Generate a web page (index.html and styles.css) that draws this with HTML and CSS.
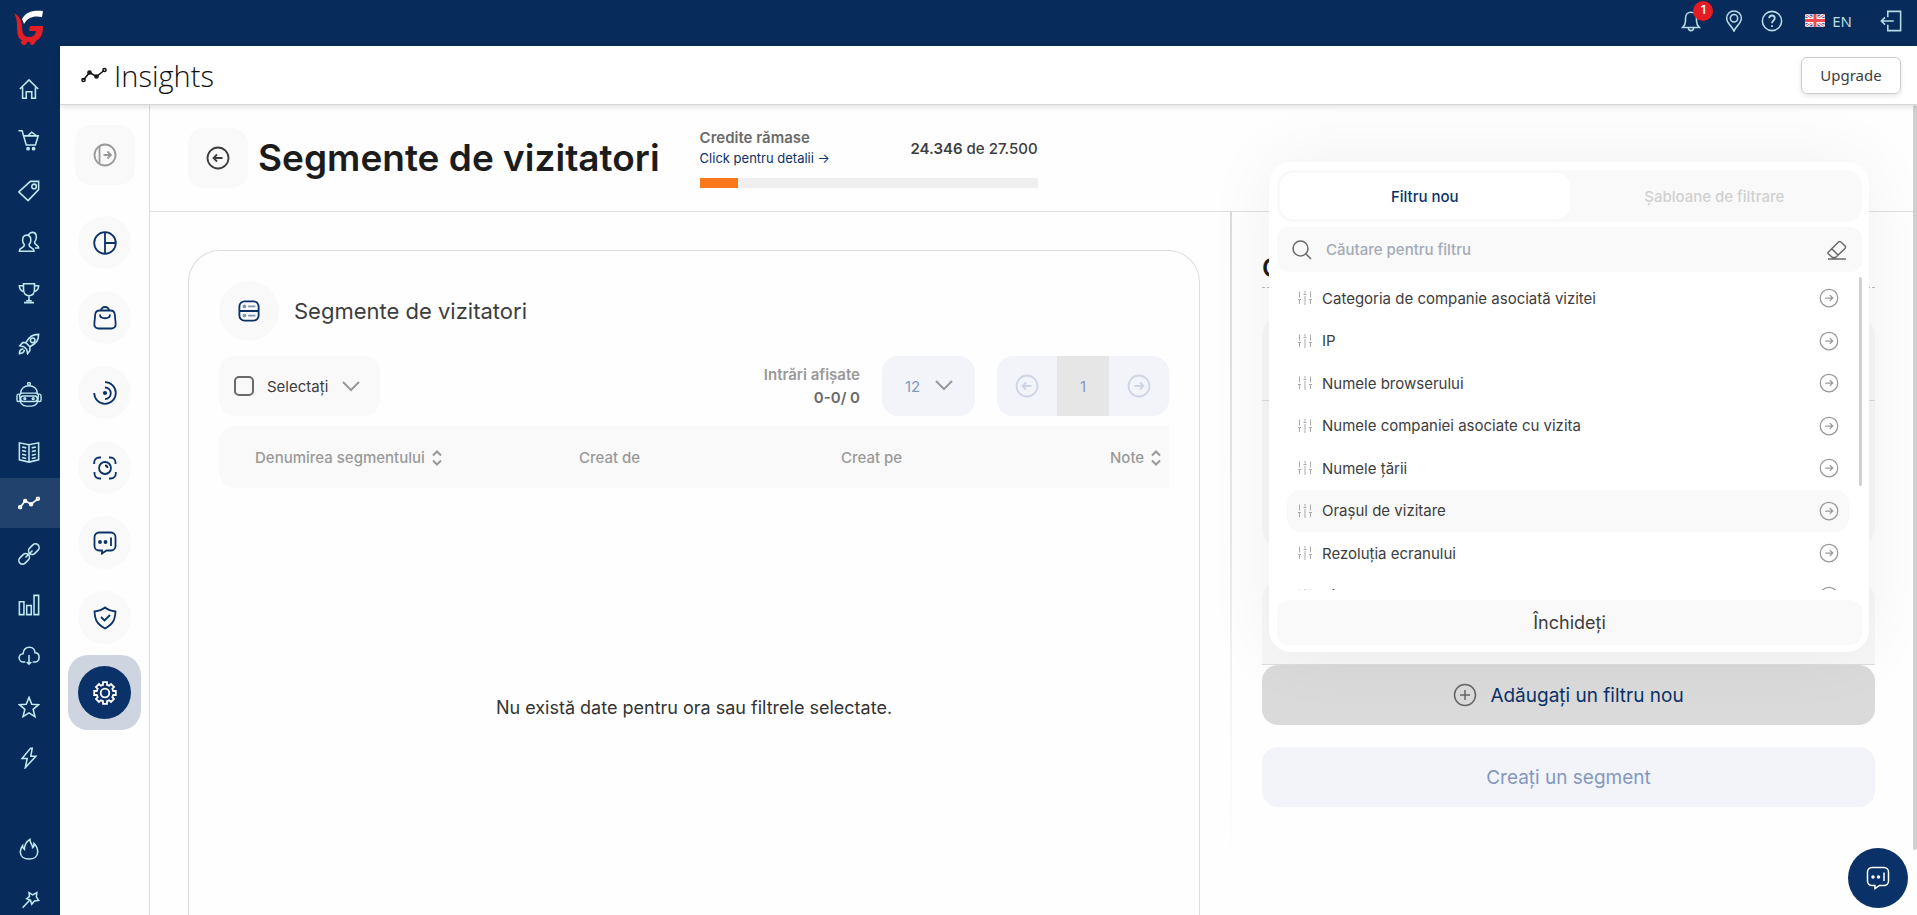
FILE: index.html
```
<!DOCTYPE html>
<html lang="ro">
<head>
    <meta charset="UTF-8">
    <meta name="viewport" content="width=device-width, initial-scale=1.0">
    <title>Insights</title>
    <link rel="stylesheet" href="styles.css">
</head>
<body>

    <!-- Shared icons -->
    <svg class="symbols" aria-hidden="true">
        <symbol id="arrow-right" viewBox="0 0 24 24"><circle cx="12" cy="12" r="10.5"/><path d="M7.5 12h9M13 8.5l3.5 3.5-3.5 3.5"/></symbol>
        <symbol id="arrow-left" viewBox="0 0 24 24"><circle cx="12" cy="12" r="10.5"/><path d="M16.5 12h-9M11 8.5L7.5 12l3.5 3.5"/></symbol>
        <symbol id="chevron" viewBox="0 0 18 18"><path d="M1 5l8 8 8-8"/></symbol>
        <symbol id="sort" viewBox="0 0 10 16"><path d="M1 5.500l4-4 4 4M1 10.500l4 4 4-4"/></symbol>
        <symbol id="sliders" viewBox="0 0 16 16"><path d="M2.500 1.500v6M2.500 9.500v4.500M1 9.500h3M8 1v2.500M6.500 4.500h3M8 6v9M13.500 1.500v6M13.500 9.500v4.500M12 9.500h3"/></symbol>
        <symbol id="trend" viewBox="0 0 26 16"><path d="M2.500 13l6-7.500 7 4 7.500-6"/><circle cx="2.500" cy="13" r="1.600"/><circle cx="8.500" cy="5.500" r="1.600"/><circle cx="15.500" cy="9.500" r="1.600"/><circle cx="23.500" cy="3" r="1.600"/></symbol>
        <symbol id="chat" viewBox="0 0 24 24"><path d="M6 1.500h12a4.500 4.500 0 0 1 4.500 4.500v9a4.500 4.500 0 0 1-4.500 4.500h-4.500L9 22.500v-3H6A4.500 4.500 0 0 1 1.500 15V6A4.500 4.500 0 0 1 6 1.500zM18 6.500v8.500"/><circle class="dot" cx="7" cy="11" r="1"/><circle class="dot" cx="12.500" cy="11" r="1"/></symbol>
    </svg>

    <div class="app">
        <nav class="sidebar">
            <a class="logo" href="#" aria-label="Gomag">
                <svg width="30" height="36" viewBox="0 0 30 36">
                    <path fill="#fff" d="M8 10C12 3 18 1 29 2l-1 6c-8-1.500-14 0-18 7z"/>
                    <path fill="#e31e24" d="M0 4c5 3 7 6 8 12 0 9 2 12 7 12 4 0 6-2 7-6h-7l1-5h13c0 10-3 16-14 16C5 33 3 28 3 17 3 11 2 8 0 4z"/>
                    <path fill="#e31e24" d="M7 32h6c0 3-1 4-3 4s-2-1-3-2zM16 32h6l-1 2c-1 1-1 2-3 2s-2-2-2-4z"/>
                </svg>
            </a>
            <a class="side-link" href="#" aria-label="Acasă"><svg viewBox="0 0 24 24"><path d="M2 12L12 2l10 10M5 10v12h4v-7h6v7h4V10"/></svg></a>
            <a class="side-link" href="#" aria-label="Comenzi"><svg viewBox="0 0 24 24"><path d="M.5 2h4l4.500 15.500h10l3-10H6.500M10 8l5-4.500 6 4.500"/><circle class="dot" cx="11" cy="21.500" r="1.200"/><circle class="dot" cx="17" cy="21.500" r="1.200"/></svg></a>
            <a class="side-link" href="#" aria-label="Produse"><svg viewBox="0 0 24 24"><path d="M13.500 1.500h9v9L11 22.500.8 13z"/><circle cx="17.500" cy="7" r="2.500"/></svg></a>
            <a class="side-link" href="#" aria-label="Clienți"><svg viewBox="0 0 24 24"><path d="M9.500 4.500c3 0 4.500 2 4.500 5.500 0 2.500-1 4-2 5 0 2 1 2.500 3 3.500 2 .8 2.500 1.500 2.500 3.500h-16c0-2 .5-2.700 2.500-3.500 2-1 3-1.500 3-3.500-1-1-2-2.500-2-5 0-3.500 1.500-5.500 4.500-5.500zM11.500 4c1-1.500 2.500-2.500 4-2.500 3 0 4.500 2 4.500 5 0 2.500-1 4.500-2 5.500 0 2 1 2.500 2.500 3.500 1.500.7 2 1.500 2 3h-4"/></svg></a>
            <a class="side-link" href="#" aria-label="Concursuri"><svg viewBox="0 0 24 24"><path d="M6 2h12v6c0 4-2 7-6 7s-6-3-6-7zM6 4H1.500c0 4 1.500 6 5.500 6.500M18 4h4.500c0 4-1.500 6-5.500 6.500M12 15v6M9 20.500h6M6.500 22.500h11"/></svg></a>
            <a class="side-link" href="#" aria-label="Marketing"><svg viewBox="0 0 24 24"><path d="M22.500 1.500c-7 0-10 2.500-14 9l4.500 4.500c7-4 9.500-7 9.500-13.500zM8.500 10.500H5L2 14l4.500 1M13 15v4l-2.500 3.500L9.500 18M6.500 15l3 3M6 17.500c-3 0-4.500 2-4.500 5 3 0 5-1.500 5.500-4"/><circle cx="16" cy="8" r="2.500"/></svg></a>
            <a class="side-link robot" href="#" aria-label="Asistent"><svg viewBox="0 0 28 28"><path d="M5 12c0-5 4-8 9-8s9 3 9 8M7 12h14a3 3 0 0 1 3 4c0 7-3 10-7 10h-6c-4 0-7-3-7-10a3 3 0 0 1 3-4zM8 15h12a2 2 0 0 1 0 6H8a2 2 0 0 1 0-6zM4 13H2.500c-1 0-1.500 1-1.500 2v4c0 1 .5 2 1.500 2H4M24 13h1.500c1 0 1.500 1 1.500 2v4c0 1-.5 2-1.500 2H24"/><circle cx="14" cy="2" r="1.500"/><circle cx="9.500" cy="18" r="1"/><circle cx="18.500" cy="18" r="1"/></svg></a>
            <a class="side-link" href="#" aria-label="Blog"><svg viewBox="0 0 24 24"><path d="M12 4L1.500 2v18.500L12 23l10.500-2.500V2zM12 4v19M4.500 6.500L9 7.500M4.500 10.500l4.500 1M4.500 14.500l4.500 1M4.500 18l4.500 1M19.500 6.500L15 7.500M19.500 10.500l-4.500 1M19.500 14.500l-4.500 1M19.500 18l-4.500 1"/></svg></a>
            <a class="side-link active" href="#" aria-label="Insights"><svg viewBox="0 0 26 16"><use href="#trend"/></svg></a>
            <a class="side-link" href="#" aria-label="Integrări"><svg viewBox="0 0 24 24"><g transform="rotate(-45 12 12)"><rect x="-2" y="8" width="13" height="8" rx="4"/><rect x="13" y="8" width="13" height="8" rx="4"/><path d="M6.500 12h11"/></g></svg></a>
            <a class="side-link" href="#" aria-label="Rapoarte"><svg viewBox="0 0 24 24"><path d="M1.500 8.500h5v14h-5zM9.500 12.500h5v10h-5zM17.500 1.500h5v21h-5z"/></svg></a>
            <a class="side-link" href="#" aria-label="Import"><svg viewBox="0 0 24 24"><path d="M8 18.500H6a4.500 4.500 0 0 1-.5-9C6 5 9 2.500 12.500 2.500c4 0 6 3 6 6 3 0 4.500 2 4.500 5s-2 5-4.500 5H16M12 11v10M9.500 18.500L12 21l2.500-2.500"/></svg></a>
            <a class="side-link" href="#" aria-label="Favorite"><svg viewBox="0 0 24 24"><path d="M12 1.500l3 7.500 7.500.5-6 5 2 8-6.500-4-6.500 4 2-8-6-5L9 9z"/></svg></a>
            <a class="side-link" href="#" aria-label="Acțiuni"><svg viewBox="0 0 24 24"><path d="M13.500 1.500L4.500 12.500h5.500l-2 10L19.500 10h-5.500l1.500-8.500z"/></svg></a>
            <a class="side-link extra" href="#" aria-label="Noutăți"><svg viewBox="0 0 24 24"><path d="M13 1.500c0 4 3 6 3 9 1.500-1 1.500-2.500 1.500-4.500 3 3 4 6 4 9 0 5-4 8-9.500 8s-9.500-3-9.500-8c0-2.500 1-4.500 2.500-6.500 0 2 .5 3 2 4 0-5 2-8.500 6-11z"/></svg></a>
            <a class="side-link" href="#" aria-label="Teme"><svg viewBox="0 0 24 24"><path d="M12 4l4 2.500L20.500 4 20 8.500l2.500 4-4.500.5-3 3.500-1.500-4.500-4-1.500 3-2.500zM13 12l-8 8.500"/></svg></a>
        </nav>

        <div class="page">
            <header class="topbar">
                <button class="top-icon bell" type="button" aria-label="Notificări">
                    <svg viewBox="0 0 24 24"><path d="M3 19c2-2 3-3 3-7V9c0-4 2.500-6.500 6-6.500S18 5 18 9v3c0 4 1 5 3 7zM9 19.500c.5 4 5.500 4 6 0"/></svg>
                    <span class="badge">1</span>
                </button>
                <button class="top-icon pin" type="button" aria-label="Locație"><svg viewBox="0 0 24 24"><path d="M12 23c-1.500-5-8-8-8-14a8 8 0 0 1 16 0c0 6-6.500 9-8 14z"/><circle cx="12" cy="9" r="4"/></svg></button>
                <button class="top-icon help" type="button" aria-label="Ajutor"><svg viewBox="0 0 24 24"><circle cx="12" cy="12" r="10.500"/><path class="mark" d="M9 9c0-4 6-4 6 0 0 2.500-3 2.500-3 5.500M12 16.500v2"/></svg></button>
                <button class="language" type="button">
                    <svg width="20" height="13" viewBox="0 0 20 13"><rect width="20" height="13" fill="#3f51a3"/><path d="M0 0l20 13M20 0L0 13" stroke="#fff" stroke-width="3"/><path d="M0 0l20 13M20 0L0 13" stroke="#f04a50" stroke-width="1"/><path d="M10 0v13M0 6.500h20" stroke="#fff" stroke-width="5"/><path d="M10 0v13M0 6.500h20" stroke="#f04a50" stroke-width="3"/></svg>
                    <span>EN</span>
                </button>
                <button class="top-icon" type="button" aria-label="Ieșire"><svg viewBox="0 0 24 24"><path d="M8.500 8V1.500h14v21h-14V16M15 12H1.500M5.500 8l-4 4 4 4"/></svg></button>
            </header>

            <div class="titlebar">
                <svg class="title-icon" viewBox="0 0 26 16"><use href="#trend"/></svg>
                <span class="app-name">Insights</span>
                <button class="upgrade" type="button">Upgrade</button>
            </div>

            <div class="body">
                <nav class="subnav">
                    <button class="toggle" type="button" aria-label="Extinde meniul"><svg viewBox="0 0 24 24"><circle cx="12" cy="12" r="10.500"/><path d="M6.500 3.500v17M10.500 12h7.500M14.500 8.500L18 12l-3.500 3.500"/></svg></button>
                    <a class="sub-link" href="#" aria-label="Panou"><span><svg viewBox="0 0 24 24"><circle cx="12" cy="12" r="10.800"/><path d="M12 1v22M12 12h11"/></svg></span></a>
                    <a class="sub-link" href="#" aria-label="Vânzări"><span><svg viewBox="0 0 24 24"><path d="M6.500 4.500h11c3 0 4 1.500 4.300 4l.8 8.500c.4 3.500-1 5.500-4 5.500H5.400c-3 0-4.400-2-4-5.500l.8-8.500c.3-2.500 1.300-4 4.300-4zM8 4.500a4 3.500 0 0 1 8 0M7 8.500c0 5 10 5 10 0"/></svg></span></a>
                    <a class="sub-link" href="#" aria-label="Vizitatori"><span><svg viewBox="0 0 24 24"><path d="M12 1.200a10.800 10.800 0 1 1-10.800 10.800M12 6.500a5.800 5.800 0 0 1 0 11.600"/><circle class="dot" cx="12" cy="12" r="1.200"/></svg></span></a>
                    <a class="sub-link" href="#" aria-label="Înregistrări"><span><svg viewBox="0 0 24 24"><path d="M1.200 8V6.500a5 5 0 0 1 5-5H8M16 1.500h1.500a5 5 0 0 1 5 5V8M22.800 16v1.500a5 5 0 0 1-5 5H16M8 22.500H6.500a5 5 0 0 1-5-5V16M12 9.500a2.500 2.500 0 0 1 2.500 2.500"/><circle cx="12" cy="12" r="6"/></svg></span></a>
                    <a class="sub-link" href="#" aria-label="Mesaje"><span><svg viewBox="0 0 24 24"><use href="#chat"/></svg></span></a>
                    <a class="sub-link" href="#" aria-label="Confidențialitate"><span><svg viewBox="0 0 24 24"><path d="M12 1.500c3 2.500 6.500 3.500 10.500 4-.5 8-2 12.500-10.500 17C3.500 18 2 13.500 1.500 5.500c4-.5 7.500-1.500 10.500-4zM8 11l3.500 3.500L17 9"/></svg></span></a>
                    <a class="sub-link active" href="#" aria-label="Setări"><span><svg viewBox="0 0 24 24"><circle cx="12" cy="12" r="4.300"/><path d="M10 1.200h4v2.600l2.200.9L18 3l3 3-1.700 1.800.9 2.200h2.600v4h-2.600l-.9 2.200L21 18l-3 3-1.800-1.700-2.200.9v2.600h-4v-2.600l-2.200-.9L6 21l-3-3 1.700-1.800-.9-2.200H1.200v-4h2.600l.9-2.200L3 6l3-3 1.800 1.700 2.200-.9z"/></svg></span></a>
                </nav>

                <main class="main">
                    <div class="page-head">
                        <button class="back" type="button" aria-label="Înapoi"><svg viewBox="0 0 24 24"><use href="#arrow-left"/></svg></button>
                        <h1>Segmente de vizitatori</h1>
                        <div class="credits">
                            <div class="credits-row">
                                <div>
                                    <div class="credits-label">Credite rămase</div>
                                    <a href="#">Click pentru detalii →</a>
                                </div>
                                <div class="credits-count"><b>24.346</b> de 27.500</div>
                            </div>
                            <div class="bar"><div class="bar-fill" style="width: 11.5%"></div></div>
                        </div>
                    </div>

                    <div class="columns">
                        <section class="card">
                            <div class="card-head">
                                <span class="card-icon"><svg viewBox="0 0 24 24"><path d="M7 1.500h10A5.500 5.500 0 0 1 22.500 7v10a5.500 5.500 0 0 1-5.500 5.500H7A5.500 5.500 0 0 1 1.500 17V7A5.500 5.500 0 0 1 7 1.500zM1.500 12h21"/><path class="soft" d="M11 7h8M11 17h8"/><circle class="soft dot" cx="7" cy="7" r="1"/><circle class="soft dot" cx="7" cy="17" r="1"/></svg></span>
                                <h2>Segmente de vizitatori</h2>
                            </div>

                            <div class="toolbar">
                                <div class="select-all">
                                    <input type="checkbox" id="select-all">
                                    <label for="select-all">Selectați</label>
                                    <svg class="chevron"><use href="#chevron"/></svg>
                                </div>
                                <div class="entries">
                                    <div class="entries-label">Intrări afișate</div>
                                    <div>0-0/ 0</div>
                                </div>
                                <div class="per-page">
                                    <select aria-label="Intrări pe pagină">
                                        <option>12</option>
                                    </select>
                                    <svg class="chevron"><use href="#chevron"/></svg>
                                </div>
                                <div class="pager">
                                    <button type="button" aria-label="Pagina anterioară"><svg viewBox="0 0 24 24"><use href="#arrow-left"/></svg></button>
                                    <button class="current" type="button">1</button>
                                    <button type="button" aria-label="Pagina următoare"><svg viewBox="0 0 24 24"><use href="#arrow-right"/></svg></button>
                                </div>
                            </div>

                            <table>
                                <thead>
                                    <tr>
                                        <th class="col-name">Denumirea segmentului <svg><use href="#sort"/></svg></th>
                                        <th class="col-by">Creat de</th>
                                        <th class="col-on">Creat pe</th>
                                        <th>Note <svg><use href="#sort"/></svg></th>
                                    </tr>
                                </thead>
                                <tbody>
                                    <tr><td colspan="4">Nu există date pentru ora sau filtrele selectate.</td></tr>
                                </tbody>
                            </table>
                        </section>

                        <aside class="builder">
                            <h2>Creați un segment</h2>
                            <div class="filters">
                                <div class="filter-block"><div class="filter-head"></div></div>
                                <div class="filter-block last"><div class="filter-head"></div></div>
                                <button class="add-filter" type="button">
                                    <svg viewBox="0 0 24 24"><circle cx="12" cy="12" r="10.500"/><path d="M12 7v10M7 12h10"/></svg>
                                    <span>Adăugați un filtru nou</span>
                                </button>

                                <div class="popup">
                                    <div class="tabs">
                                        <button class="active" type="button">Filtru nou</button>
                                        <button type="button">Șabloane de filtrare</button>
                                    </div>
                                    <div class="search">
                                        <svg viewBox="0 0 20 20"><circle cx="8.500" cy="8.500" r="7.500"/><path d="M14 14l5 5"/></svg>
                                        <input type="text" placeholder="Căutare pentru filtru" aria-label="Căutare pentru filtru">
                                        <button type="button" aria-label="Șterge"><svg viewBox="0 0 20 20"><path d="M1.500 12L11.500 2q1-1 2.500 0L18 6q1 1 0 2.500L8.500 17.500H5.500L1.500 14q-1-1 0-2zM5 9l6 6M1 19h18"/></svg></button>
                                    </div>
                                    <div class="filter-list">
                                        <div class="filter-rows">
                                            <button type="button"><svg class="sliders"><use href="#sliders"/></svg><span>Categoria de companie asociată vizitei</span><svg class="go"><use href="#arrow-right"/></svg></button>
                                            <button type="button"><svg class="sliders"><use href="#sliders"/></svg><span>IP</span><svg class="go"><use href="#arrow-right"/></svg></button>
                                            <button type="button"><svg class="sliders"><use href="#sliders"/></svg><span>Numele browserului</span><svg class="go"><use href="#arrow-right"/></svg></button>
                                            <button type="button"><svg class="sliders"><use href="#sliders"/></svg><span>Numele companiei asociate cu vizita</span><svg class="go"><use href="#arrow-right"/></svg></button>
                                            <button type="button"><svg class="sliders"><use href="#sliders"/></svg><span>Numele țării</span><svg class="go"><use href="#arrow-right"/></svg></button>
                                            <button class="hover" type="button"><svg class="sliders"><use href="#sliders"/></svg><span>Orașul de vizitare</span><svg class="go"><use href="#arrow-right"/></svg></button>
                                            <button type="button"><svg class="sliders"><use href="#sliders"/></svg><span>Rezoluția ecranului</span><svg class="go"><use href="#arrow-right"/></svg></button>
                                            <button type="button"><svg class="sliders"><use href="#sliders"/></svg><span>Sistem</span><svg class="go"><use href="#arrow-right"/></svg></button>
                                        </div>
                                        <div class="list-thumb"></div>
                                    </div>
                                    <button class="close" type="button">Închideți</button>
                                </div>
                            </div>
                            <button class="create" type="button">Creați un segment</button>
                        </aside>
                    </div>
                </main>
                <div class="page-thumb"></div>
            </div>
        </div>
    </div>

    <button class="chat-button" type="button" aria-label="Chat"><svg viewBox="0 0 24 24"><use href="#chat"/></svg></button>

</body>
</html>
```
FILE: styles.css
```
* {
    box-sizing: border-box;
}
body {
    margin: 0;
    font-family: Inter, "Noto Sans", sans-serif;
    font-size: 15px;
    color: #3d3d3d;
    background-color: #fefefe;
    overflow: hidden;
}
h1, h2 {
    margin: 0;
}
a {
    text-decoration: none;
}
button, input, select {
    font: inherit;
    color: inherit;
    border: none;
    padding: 0;
    margin: 0;
    background: none;
}
button {
    cursor: pointer;
}
svg {
    fill: none;
    stroke: currentColor;
    stroke-width: 1.5;
    flex-shrink: 0;
}
.dot {
    fill: currentColor;
}
.symbols {
    display: none;
}

/* Layout */
.app {
    display: flex;
    height: 100vh;
    overflow: hidden;
}
.page {
    flex: 1;
    display: flex;
    flex-direction: column;
    min-width: 0;
}
.body {
    flex: 1;
    display: flex;
    min-height: 0;
    position: relative;
}
.main {
    flex: 1;
    min-width: 0;
    margin-right: 4px;
    display: flex;
    flex-direction: column;
}
.page-thumb {
    position: absolute;
    right: 0;
    top: 0;
    width: 4px;
    height: 92%;
    border-radius: 4px;
    background-color: #d0d0d0;
}

/* Left sidebar */
.sidebar {
    width: 60px;
    flex-shrink: 0;
    display: flex;
    flex-direction: column;
    gap: 1px;
    overflow: hidden;
    background-color: #072b5b;
}
.logo {
    height: 63px;
    flex-shrink: 0;
    padding: 9px 14px;
}
.logo svg {
    stroke: none;
}
.side-link {
    height: 50px;
    flex-shrink: 0;
    display: flex;
    align-items: center;
    justify-content: center;
    padding-right: 2px;
    color: #bfeaf0;
}
.side-link svg {
    width: 22px;
    height: 22px;
    stroke-width: 1.7;
}
.side-link.robot {
    margin-bottom: 6px;
}
.side-link.robot svg {
    width: 26px;
    height: 26px;
    stroke-width: 1.5;
}
.side-link.active {
    color: #fff;
    background-color: #20426d;
}
.side-link.active svg {
    stroke-width: 2;
}
.side-link.extra {
    margin-top: 40px;
}

/* Top bar */
.topbar {
    height: 46px;
    flex-shrink: 0;
    display: flex;
    align-items: center;
    justify-content: flex-end;
    padding: 0 15px 5px 0;
    color: #b5dbe3;
    background-color: #072b5b;
}
.top-icon {
    display: flex;
    position: relative;
}
.top-icon svg {
    width: 22px;
    height: 22px;
    stroke-width: 1.7;
}
.bell {
    margin-right: 21px;
}
.pin {
    margin-right: 16px;
}
.help {
    margin-right: 22px;
}
.mark {
    stroke-width: 2;
}
.badge {
    position: absolute;
    left: 13px;
    top: -9px;
    width: 20px;
    height: 20px;
    border-radius: 10px;
    font-size: 12px;
    font-weight: 600;
    line-height: 18px;
    color: #fff;
    background-color: #e51c23;
}
.language {
    display: flex;
    align-items: center;
    gap: 7px;
    margin-right: 28px;
    font-family: "Noto Sans", sans-serif;
    font-size: 15px;
}

/* Title bar */
.titlebar {
    height: 59px;
    flex-shrink: 0;
    display: flex;
    align-items: center;
    padding: 0 16px 0 21px;
    background-color: #fff;
    border-bottom: 1px solid #d6d6d6;
    box-shadow: 0 2px 6px rgba(0, 0, 0, 0.12);
    z-index: 1;
}
.title-icon {
    width: 26px;
    height: 16px;
    color: #111;
}
.app-name {
    margin-left: 7px;
    font-family: "Open Sans", sans-serif;
    font-size: 29px;
    font-weight: 300;
    color: #111;
}
.upgrade {
    width: 100px;
    height: 37px;
    margin-left: auto;
    border: 1px solid #ccc;
    border-radius: 6px;
    font-family: "Noto Sans", sans-serif;
    box-shadow: 0 2px 5px rgba(0, 0, 0, 0.1);
}

/* Secondary navigation */
.subnav {
    width: 90px;
    flex-shrink: 0;
    padding: 20px 8px 0;
    border-right: 1px solid #ddd;
    color: #0b3268;
}
.toggle {
    display: flex;
    align-items: center;
    justify-content: center;
    width: 60px;
    height: 60px;
    margin: 0 0 20px 7px;
    border-radius: 16px;
    color: #999;
    background-color: #f9f9f9;
}
.toggle svg, .sub-link svg, .back svg {
    width: 24px;
    height: 24px;
    stroke-width: 1.8;
}
.sub-link {
    display: flex;
    align-items: center;
    justify-content: center;
    height: 75px;
    border-radius: 20px;
    color: inherit;
}
.sub-link span {
    display: flex;
    align-items: center;
    justify-content: center;
    width: 53px;
    height: 53px;
    border-radius: 50%;
    background-color: #f9f9f9;
}
.sub-link.active {
    background-color: #ced5e1;
}
.sub-link.active span {
    color: #fff;
    background-color: #0b3268;
}

/* Page header */
.page-head {
    display: flex;
    align-items: center;
    height: 107px;
    flex-shrink: 0;
    padding: 0 38px;
    border-bottom: 1px solid #ddd;
}
.back {
    display: flex;
    align-items: center;
    justify-content: center;
    width: 60px;
    height: 60px;
    border-radius: 16px;
    background-color: #f9f9f9;
}
.page-head h1 {
    margin-left: 10px;
    font-size: 37px;
    font-weight: 600;
    line-height: 60px;
    color: #1c1c1c;
}
.credits {
    width: 338px;
    margin-left: 40px;
}
.credits-row {
    display: flex;
    align-items: center;
    justify-content: space-between;
    margin-bottom: 10px;
}
.credits-label {
    font-weight: 600;
    line-height: 20px;
    color: #6a6a6a;
}
.credits a {
    display: block;
    font-size: 13px;
    line-height: 20px;
    color: #0b3268;
}
.credits-count {
    font-weight: 500;
}
.credits-count b {
    font-weight: 600;
}
.bar {
    height: 10px;
    background-color: #efefef;
}
.bar-fill {
    height: 10px;
    background-color: #fa781c;
}

/* Content */
.columns {
    flex: 1;
    min-height: 0;
    display: grid;
    grid-template-columns: minmax(0, 1fr) 683px;
}
.card {
    margin: 38px 30px 0 38px;
    padding: 30px;
    border: 1px solid #ddd;
    border-bottom: none;
    border-radius: 32px 32px 0 0;
}
.card-head {
    display: flex;
    align-items: center;
    gap: 15px;
    margin-bottom: 15px;
}
.card-icon {
    display: flex;
    align-items: center;
    justify-content: center;
    width: 60px;
    height: 60px;
    border-radius: 50%;
    color: #0b3268;
    background-color: #f9f9f9;
}
.card-icon svg {
    width: 22px;
    height: 22px;
    stroke-width: 2;
}
.soft {
    opacity: 0.5;
}
.card-head h2 {
    font-size: 22px;
    font-weight: 400;
}
.toolbar {
    display: flex;
    align-items: center;
    height: 60px;
    margin-bottom: 10px;
}
.select-all {
    display: flex;
    align-items: center;
    width: 161px;
    height: 60px;
    padding-left: 15px;
    border-radius: 16px;
    background-color: #f9f9f9;
}
.select-all input {
    appearance: none;
    width: 20px;
    height: 20px;
    margin-right: 13px;
    border: 2px solid #6a6a6a;
    border-radius: 5px;
}
.chevron {
    width: 18px;
    height: 18px;
    color: #999;
    stroke-width: 2;
}
.select-all .chevron {
    margin-left: 14px;
}
.entries {
    margin-left: auto;
    margin-right: 22px;
    font-weight: 600;
    line-height: 23px;
    text-align: right;
    color: #6a6a6a;
}
.entries-label {
    color: #999;
}
.per-page {
    position: relative;
    margin-right: 22px;
}
.per-page select {
    appearance: none;
    width: 93px;
    height: 60px;
    padding-left: 23px;
    border-radius: 16px;
    color: #8398bd;
    background-color: #f3f4f9;
}
.per-page .chevron {
    position: absolute;
    right: 22px;
    top: 20px;
    pointer-events: none;
}
.pager {
    display: flex;
    height: 60px;
    border-radius: 16px;
    overflow: hidden;
    color: #cdd5e4;
    background-color: #f3f4f9;
}
.pager button {
    display: flex;
    align-items: center;
    justify-content: center;
    width: 60px;
}
.pager .current {
    width: 52px;
    color: #8398bd;
    background-color: #e6e6e6;
}
.pager svg {
    width: 24px;
    height: 24px;
    stroke-width: 1.8;
}
table {
    width: 100%;
    border-collapse: collapse;
    table-layout: fixed;
}
th {
    height: 62px;
    padding: 0 0 0 36px;
    font-weight: 500;
    text-align: left;
    white-space: nowrap;
    color: #999;
    background-color: #f9f9f9;
}
th:first-child {
    border-radius: 16px 0 0 16px;
}
th svg {
    width: 10px;
    height: 16px;
    margin-left: 3px;
    vertical-align: -3px;
    stroke-width: 2;
}
.col-name {
    width: 324px;
}
.col-by {
    width: 262px;
}
.col-on {
    width: 269px;
}
td {
    height: 438px;
    padding: 0;
    font-size: 18px;
    text-align: center;
    color: #333;
}

/* Segment builder */
.builder {
    padding: 38px 38px 0 30px;
    border-left: 2px solid;
    border-image: linear-gradient(#dcdcdc, #e6e6e6 40%, #fefefe 87%) 1;
}
.builder h2 {
    height: 38px;
    margin-bottom: 28px;
    border-bottom: 1px dashed #bbb;
    font-size: 26px;
    font-weight: 600;
    line-height: 36px;
    color: #1c1c1c;
}
.filters {
    position: relative;
}
.filter-block {
    height: 232px;
    margin-bottom: 32px;
    border-radius: 20px;
    background-color: #f7f7f7;
}
.filter-head {
    height: 85px;
    border-bottom: 1px solid #ddd;
}
.filter-block.last {
    height: 85px;
    margin-bottom: 0;
    border-radius: 20px 20px 0 0;
}
.add-filter {
    display: flex;
    align-items: center;
    justify-content: center;
    gap: 13px;
    width: 100%;
    height: 60px;
    border-radius: 16px;
    font-size: 19px;
    color: #0b3268;
    background-color: #dadada;
}
.add-filter svg {
    width: 24px;
    height: 24px;
    color: #666;
}
.create {
    width: 100%;
    height: 60px;
    margin-top: 22px;
    border-radius: 16px;
    font-size: 19px;
    color: #8398bd;
    background-color: #f3f4f9;
}

/* Filter popup */
.popup {
    position: absolute;
    left: 7px;
    right: 6px;
    bottom: 73px;
    padding: 8px 7px 7px 8px;
    border-radius: 22px;
    background-color: #fff;
    box-shadow: 0 0 70px rgba(0, 0, 0, 0.06);
}
.tabs {
    display: flex;
    height: 52px;
    margin-bottom: 5px;
    padding: 3px;
    border-radius: 16px;
    background-color: #f9f9f9;
}
.tabs button {
    flex: 1;
    border-radius: 14px;
    font-weight: 500;
    color: #d0d0d0;
}
.tabs .active {
    color: #0b3268;
    background-color: #fff;
}
.search {
    display: flex;
    align-items: center;
    height: 45px;
    margin-bottom: 5px;
    padding: 0 15px;
    border-radius: 12px;
    color: #6a6a6a;
    background-color: #f9f9f9;
}
.search svg {
    display: block;
    width: 20px;
    height: 20px;
}
.search input {
    flex: 1;
    min-width: 0;
    margin-left: 14px;
    font-weight: 500;
}
.search input::placeholder {
    color: #a3aab8;
}
.filter-list {
    position: relative;
    height: 313px;
    margin-bottom: 10px;
    padding: 0 13px 0 10px;
    overflow: hidden;
}
.filter-rows {
    display: grid;
    grid-template-rows: repeat(8, 1fr);
    height: 340px;
}
.filter-rows button {
    display: flex;
    align-items: center;
    padding: 0 10px;
    border-radius: 14px;
    text-align: left;
}
.filter-rows .hover {
    background-color: #f9f9f9;
}
.filter-rows span {
    flex: 1;
    margin-left: 9px;
}
.sliders {
    width: 16px;
    height: 16px;
    color: #aaa;
    stroke-width: 1;
}
.go {
    width: 20px;
    height: 20px;
    color: #999;
}
.list-thumb {
    position: absolute;
    right: 0;
    top: 0;
    width: 3px;
    height: 209px;
    border-radius: 3px;
    background-color: #d0d0d0;
}
.close {
    display: block;
    width: 100%;
    height: 45px;
    border-radius: 12px;
    font-size: 18px;
    background-color: #f9f9f9;
}

/* Chat */
.chat-button {
    position: fixed;
    right: 9px;
    bottom: 7px;
    z-index: 2;
    display: flex;
    align-items: center;
    justify-content: center;
    width: 60px;
    height: 60px;
    border-radius: 50%;
    color: #fff;
    background-color: #0b3268;
}
.chat-button svg {
    width: 24px;
    height: 24px;
}
```
